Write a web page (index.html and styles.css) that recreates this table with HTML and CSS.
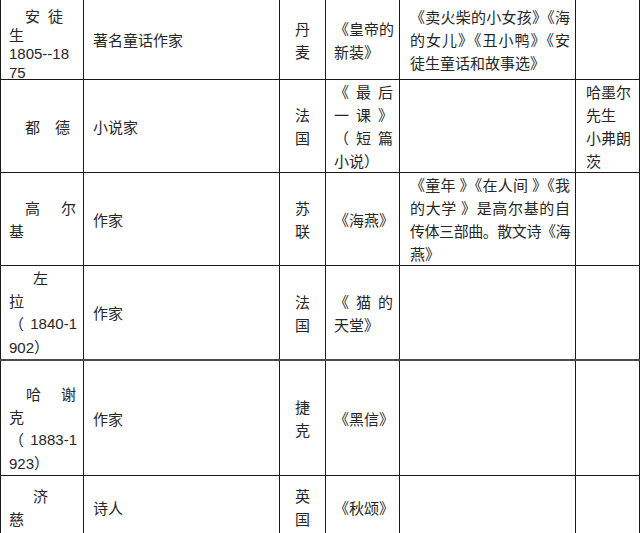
FILE: index.html
```html
<!DOCTYPE html>
<html lang="zh-CN">
<head>
<meta charset="utf-8">
<title>作家表</title>
<link rel="stylesheet" href="styles.css">
</head>
<body>
<table class="grid">
  <colgroup>
    <col class="w-name"><col class="w-role"><col class="w-nation"><col class="w-work"><col class="w-note"><col class="w-extra">
  </colgroup>
  <tbody>
    <tr class="r1">
      <td class="name tight">
        <span class="ln sp lead pr14"><span>安</span><span>徒</span></span>
        <span class="ln">生</span>
        <span class="ln num">1805--18</span>
        <span class="ln num short">75</span>
      </td>
      <td class="role">著名童话作家</td>
      <td class="nation"><span class="ln">丹</span><span class="ln">麦</span></td>
      <td class="work"><span class="ln">《皇帝的</span><span class="ln">新装》</span></td>
      <td class="note">
        <span class="ln jf">《卖火柴的小女孩》《海</span>
        <span class="ln jf">的女儿》《丑小鸭》《安</span>
        <span class="ln">徒生童话和故事选》</span>
      </td>
      <td class="extra"></td>
    </tr>
    <tr class="r2">
      <td class="name"><span class="ln sp lead pr7"><span>都</span><span>德</span></span></td>
      <td class="role">小说家</td>
      <td class="nation"><span class="ln">法</span><span class="ln">国</span></td>
      <td class="work">
        <span class="ln sp"><span>《</span><span>最</span><span>后</span></span>
        <span class="ln sp"><span>一</span><span>课</span><span>》</span></span>
        <span class="ln sp"><span>（</span><span>短</span><span>篇</span></span>
        <span class="ln">小说）</span>
      </td>
      <td class="note"></td>
      <td class="extra">
        <span class="ln">哈墨尔</span>
        <span class="ln">先生</span>
        <span class="ln">小弗朗</span>
        <span class="ln">茨</span>
      </td>
    </tr>
    <tr class="r3">
      <td class="name"><span class="ln sp lead pr1"><span>高</span><span>尔</span></span><span class="ln">基</span></td>
      <td class="role">作家</td>
      <td class="nation"><span class="ln">苏</span><span class="ln">联</span></td>
      <td class="work"><span class="ln">《海燕》</span></td>
      <td class="note">
        <span class="ln jf">《童年 》《在人间 》《我</span>
        <span class="ln jf">的大学 》是高尔基的自</span>
        <span class="ln jf squeeze">传体三部曲。散文诗《海</span>
        <span class="ln">燕》</span>
      </td>
      <td class="extra"></td>
    </tr>
    <tr class="r4">
      <td class="name">
        <span class="ln lead2">左</span>
        <span class="ln">拉</span>
        <span class="ln sp"><span>（</span><span class="num">1840-1</span></span>
        <span class="ln"><span class="num">902</span>）</span>
      </td>
      <td class="role">作家</td>
      <td class="nation"><span class="ln">法</span><span class="ln">国</span></td>
      <td class="work">
        <span class="ln sp"><span>《</span><span>猫</span><span>的</span></span>
        <span class="ln">天堂》</span>
      </td>
      <td class="note"></td>
      <td class="extra"></td>
    </tr>
    <tr class="r5">
      <td class="name low">
        <span class="ln sp lead3 pr1"><span>哈</span><span>谢</span></span>
        <span class="ln">克</span>
        <span class="ln sp"><span>（</span><span class="num">1883-1</span></span>
        <span class="ln"><span class="num">923</span>）</span>
      </td>
      <td class="role">作家</td>
      <td class="nation"><span class="ln">捷</span><span class="ln">克</span></td>
      <td class="work"><span class="ln">《黑信》</span></td>
      <td class="note"></td>
      <td class="extra"></td>
    </tr>
    <tr class="r6">
      <td class="name"><span class="ln lead2">济</span><span class="ln">慈</span></td>
      <td class="role">诗人</td>
      <td class="nation"><span class="ln">英</span><span class="ln">国</span></td>
      <td class="work"><span class="ln">《秋颂》</span></td>
      <td class="note"></td>
      <td class="extra"></td>
    </tr>
  </tbody>
</table>
</body>
</html>
```

FILE: styles.css
```css
html, body {
  margin: 0;
  padding: 0;
  background: #ffffff;
}

body {
  width: 640px;
  height: 533px;
  overflow: hidden;
  font-family: "Noto Sans CJK SC", "Noto Sans", sans-serif;
  font-size: 15px;
  color: #262626;
}

.grid {
  border-collapse: collapse;
  table-layout: fixed;
  width: 639px;
}

.w-name { width: 83px; }
.w-role { width: 196px; }
.w-nation { width: 46px; }
.w-work { width: 74px; }
.w-note { width: 176px; }
.w-extra { width: 64px; }

.grid td {
  border: 1px solid #1a1a1a;
  vertical-align: middle;
  padding: 0 6px 0 8px;
  line-height: 23px;
  text-align: left;
}

.r1 td { border-top: none; height: 76px; }
.r2 td { height: 92px; }
.r3 td { height: 92px; }
.r4 td { height: 92px; }
.r5 td { height: 114px; border-top: 2px solid #4a4a4a; }
.r6 td { height: 62px; }

.ln {
  display: block;
  white-space: nowrap;
}

.sp {
  display: flex;
  justify-content: space-between;
}

.jf {
  text-align: justify;
  text-align-last: justify;
}

.squeeze { letter-spacing: -0.5px; }

.num {
  font-family: "Liberation Sans", "Noto Sans", sans-serif;
}

.grid td.name.tight { line-height: 19px; padding-top: 3px; }
.name.tight .short { height: 14px; }
.name.low { vertical-align: bottom; }

.lead { padding-left: 16px; }
.lead2 { padding-left: 24px; }
.lead3 { padding-left: 17px; }

.pr1 { padding-right: 1px; }
.pr7 { padding-right: 7px; }
.pr14 { padding-right: 14px; }

.grid td.role { padding-left: 9px; }

.grid td.nation { padding: 0 6px; text-align: center; }

.grid td.work { padding: 0 6px 0 8px; }

.grid td.note { padding: 0 5px 0 10px; }

.grid td.extra { padding: 0 2px 0 10px; }
```
